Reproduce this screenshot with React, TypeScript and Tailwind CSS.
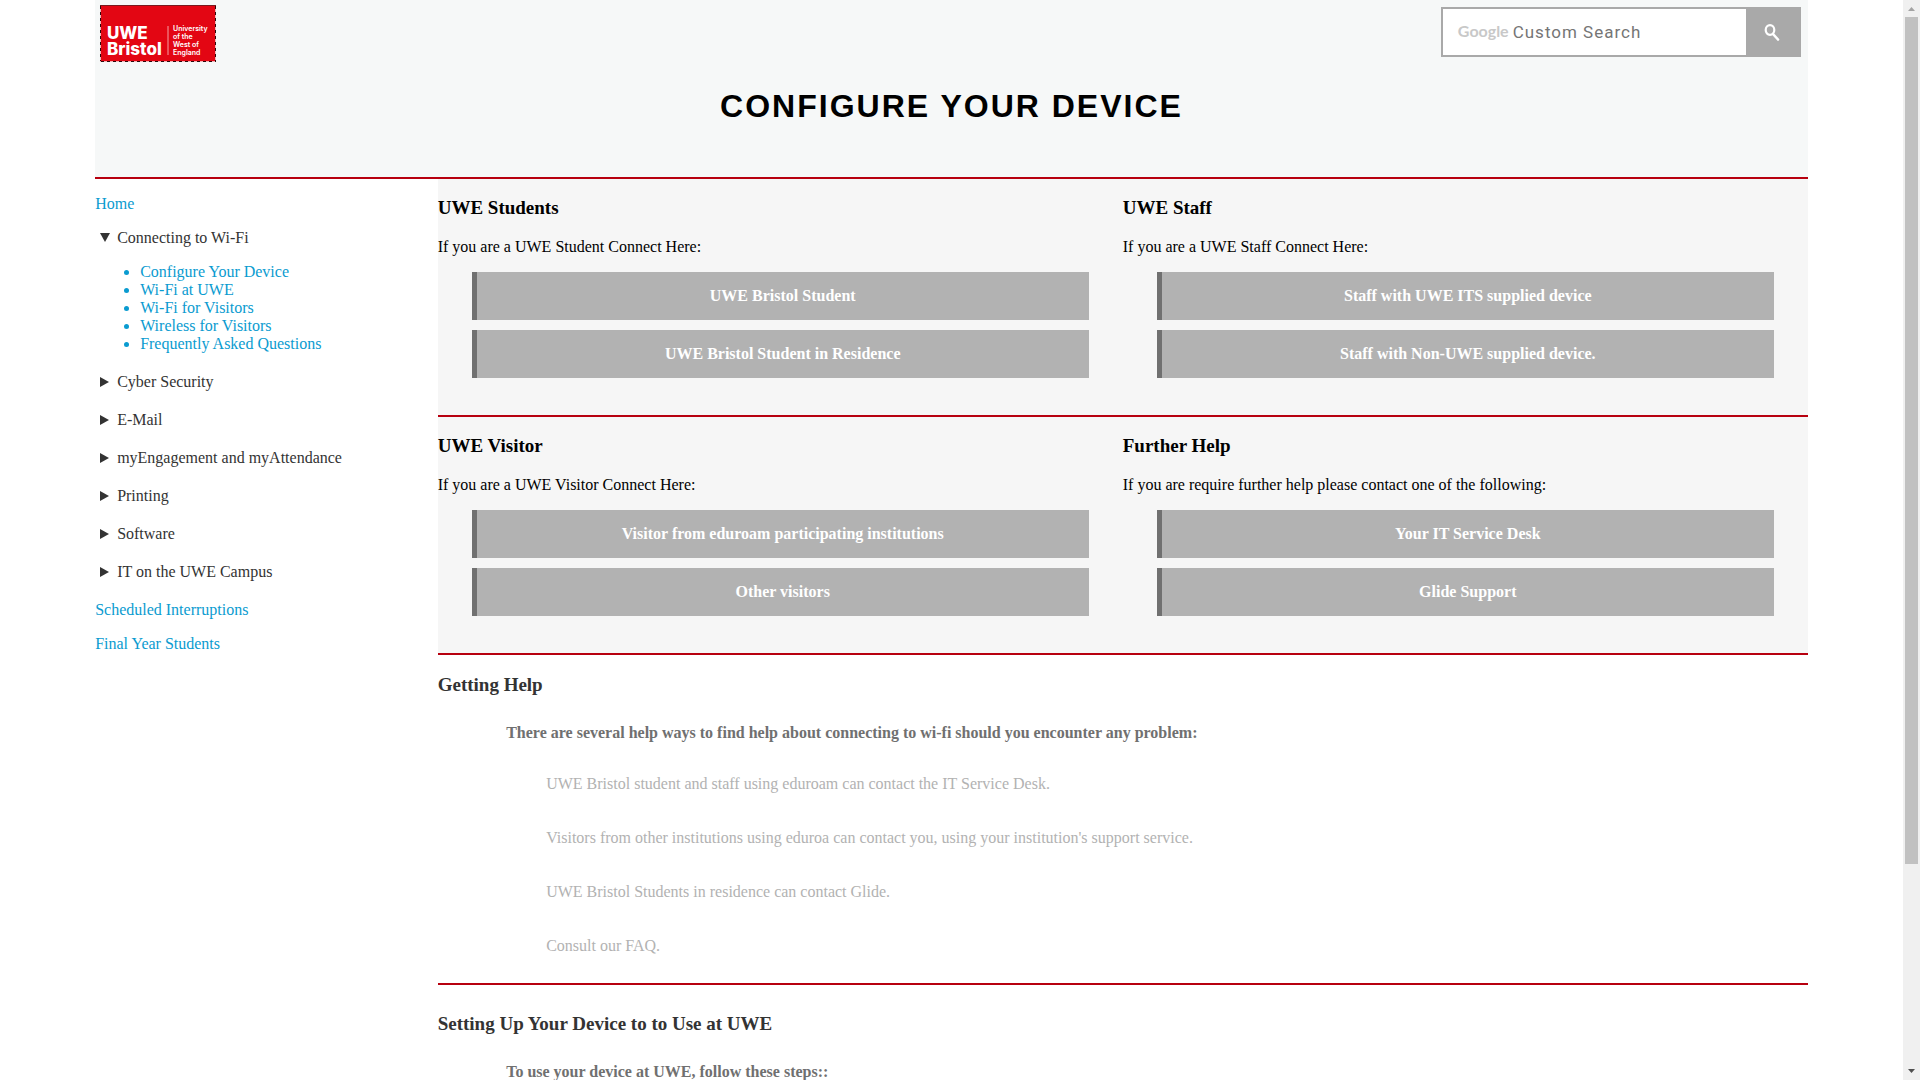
import React from "react";

const wifiLinks = [
  "Configure Your Device",
  "Wi-Fi at UWE",
  "Wi-Fi for Visitors",
  "Wireless for Visitors",
  "Frequently Asked Questions",
];

const closedMenus = [
  "Cyber Security",
  "E-Mail",
  "myEngagement and myAttendance",
  "Printing",
  "Software",
  "IT on the UWE Campus",
];

const helpItems = [
  "UWE Bristol student and staff using eduroam can contact the IT Service Desk.",
  "Visitors from other institutions using eduroa can contact you, using your institution's support service.",
  "UWE Bristol Students in residence can contact Glide.",
  "Consult our FAQ.",
];

type PanelProps = { title: string; text: string; links: string[] };

const panelRows: PanelProps[][] = [
  [
    {
      title: "UWE Students",
      text: "If you are a UWE Student Connect Here:",
      links: ["UWE Bristol Student", "UWE Bristol Student in Residence"],
    },
    {
      title: "UWE Staff",
      text: "If you are a UWE Staff Connect Here:",
      links: ["Staff with UWE ITS supplied device", "Staff with Non-UWE supplied device."],
    },
  ],
  [
    {
      title: "UWE Visitor",
      text: "If you are a UWE Visitor Connect Here:",
      links: ["Visitor from eduroam participating institutions", "Other visitors"],
    },
    {
      title: "Further Help",
      text: "If you are require further help please contact one of the following:",
      links: ["Your IT Service Desk", "Glide Support"],
    },
  ],
];

function Logo() {
  return (
    <a href="#" aria-label="UWE Bristol" className="mt-[5px] ml-[5px] block h-[57px] w-[116px]">
      <svg viewBox="0 0 116 57" className="h-full w-full">
        <rect width="116" height="57" fill="#e30613" />
        <path d="M0 .5H116" stroke="#7a1a1e" />
        <path d="M.5 1V56M115.5 1V56M0 56.5H116" stroke="#f4b5b8" />
        <path d="M.5 1V56M115.5 1V56M1 56.5H116" stroke="#2a0a0c" strokeDasharray="3 3" />
        <g fill="#fff" fontFamily="Inter, sans-serif">
          <text x="7" y="34" fontSize="17" fontWeight="800">UWE</text>
          <text x="7" y="50" fontSize="17" fontWeight="800">Bristol</text>
          <g fontSize="7" fontWeight="600">
            <text x="73" y="26">University</text>
            <text x="73" y="34">of the</text>
            <text x="73" y="42">West of</text>
            <text x="73" y="50">England</text>
          </g>
        </g>
        <path d="M68 21V50" stroke="#f5a0a4" />
      </svg>
    </a>
  );
}

function SearchBox() {
  return (
    <form
      className="mt-[7px] mr-[7px] flex h-[50px] w-[360px] border-2 border-[#a9a9a9]"
      onSubmit={(e) => e.preventDefault()}
    >
      <label htmlFor="site-search" className="flex items-center bg-white pl-[15px] pb-[2px] font-[Lato,sans-serif] text-base font-bold text-[#c8c8c8]">
        Google
      </label>
      <input
        id="site-search"
        type="text"
        placeholder="Custom Search"
        className="min-w-0 flex-1 bg-white pl-[4px] font-[Roboto,sans-serif] text-[17px] tracking-[1px] text-[#757575] outline-none placeholder:text-[#757575]"
      />
      <button type="submit" aria-label="Search" className="flex w-[53px] items-center justify-center bg-[#a9a9a9]">
        <svg viewBox="0 0 16 17" className="h-[17px] w-4" fill="none" stroke="#fff">
          <ellipse cx="6" cy="6" rx="4.300" ry="4.800" strokeWidth="2.200" />
          <path d="M9 10l5 5.500" strokeWidth="2.600" strokeLinecap="round" />
        </svg>
      </button>
    </form>
  );
}

function Menu({ title, open, children }: { title: string; open?: boolean; children?: React.ReactNode }) {
  return (
    <details open={open} className="group text-[#333]">
      <summary className="flex cursor-pointer list-none items-center pl-[5px]">
        <svg viewBox="0 0 10 10" className="mr-[7px] h-[10px] w-[10px] group-open:rotate-90" fill="#333">
          <path d="M0 0L9 5L0 10Z" />
        </svg>
        {title}
      </summary>
      {children}
    </details>
  );
}

function Panel({ title, text, links }: PanelProps) {
  return (
    <section className="w-1/2 pt-[18px] pb-[37px]">
      <h3 className="text-[19px] leading-[21px] font-bold">{title}</h3>
      <p className="mt-5">{text}</p>
      <div className="mx-[5%] mt-4 flex flex-col gap-[10px]">
        {links.map((link) => (
          <a
            key={link}
            href="#"
            className="flex h-12 items-center justify-center border-l-[5px] border-[#707070] bg-[#b2b2b2] font-bold text-white"
          >
            {link}
          </a>
        ))}
      </div>
    </section>
  );
}

function ScrollBar() {
  return (
    <div className="flex w-[17px] shrink-0 flex-col items-center bg-[#f0f0f0]" aria-hidden="true">
      <svg viewBox="0 0 17 17" className="h-[17px] w-[17px] shrink-0" fill="#a3a3a3">
        <path d="M5 11L8.500 7L12 11Z" />
      </svg>
      <div className="flex w-[13px] flex-1 flex-col">
        <div className="h-[81%] bg-[#c1c1c1]" />
      </div>
      <svg viewBox="0 0 17 17" className="h-[17px] w-[17px] shrink-0" fill="#505050">
        <path d="M5 6L8.500 10L12 6Z" />
      </svg>
    </div>
  );
}

export default function App() {
  return (
    <div className="flex h-screen overflow-hidden bg-white font-['Liberation_Serif',serif] text-base leading-[18px] text-black">
      <div className="min-w-0 flex-1 overflow-hidden">
        <div className="px-[5%]">
          <header className="border-b-2 border-[#b7000f] bg-[#f6f8f8] pb-[51px]">
            <div className="flex items-start justify-between">
              <Logo />
              <SearchBox />
            </div>
            <h1 className="mt-6 text-center font-['Liberation_Sans',sans-serif] text-[32px] leading-10 font-bold tracking-[2px]">
              CONFIGURE YOUR DEVICE
            </h1>
          </header>

          <div className="flex">
            <nav className="w-1/5 pt-4 text-[#0a9bd0]" aria-label="IT help">
              <a href="#" className="block">Home</a>
              <div className="mt-4 mb-5 flex flex-col gap-5">
                <Menu title="Connecting to Wi-Fi" open>
                  <ul className="mt-4 list-disc pl-[45px] text-[#0a9bd0]">
                    {wifiLinks.map((link) => (
                      <li key={link}>
                        <a href="#">{link}</a>
                      </li>
                    ))}
                  </ul>
                </Menu>
                {closedMenus.map((title) => (
                  <Menu key={title} title={title} />
                ))}
              </div>
              <a href="#" className="block">Scheduled Interruptions</a>
              <a href="#" className="mt-4 block">Final Year Students</a>
            </nav>

            <main className="w-4/5">
              {panelRows.map((row) => (
                <div key={row[0].title} className="flex border-b-2 border-[#b7000f] bg-[#f6f6f6]">
                  {row.map((panel) => (
                    <Panel key={panel.title} {...panel} />
                  ))}
                </div>
              ))}

              <section className="border-b-2 border-[#b7000f] pt-[19px] pb-7">
                <h3 className="text-[19px] leading-[21px] font-bold text-[#333]">Getting Help</h3>
                <div className="mt-[29px] pl-[5%]">
                  <p className="font-bold text-[#707070]">
                    There are several help ways to find help about connecting to wi-fi should you encounter any problem:
                  </p>
                  <ul className="mt-[33px] flex flex-col gap-9 pl-10 text-[#b2b2b2]">
                    {helpItems.map((item) => (
                      <li key={item}>{item}</li>
                    ))}
                  </ul>
                </div>
              </section>

              <section className="pt-7">
                <h3 className="text-[19px] leading-[21px] font-bold text-[#333]">Setting Up Your Device to to Use at UWE</h3>
                <p className="mt-[29px] pl-[5%] font-bold text-[#707070]">To use your device at UWE, follow these steps::</p>
              </section>
            </main>
          </div>
        </div>
      </div>
      <ScrollBar />
    </div>
  );
}
